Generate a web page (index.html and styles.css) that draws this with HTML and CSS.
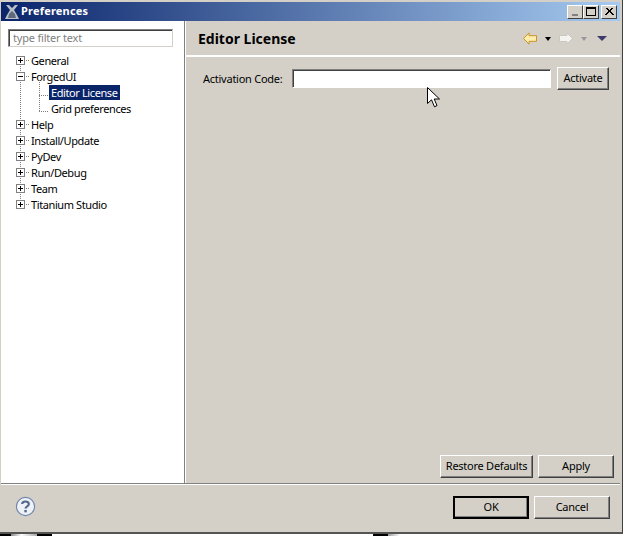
FILE: index.html
```html
<!DOCTYPE html>
<html lang="en">
<head>
    <meta charset="UTF-8">
    <meta name="viewport" content="width=device-width, initial-scale=1.0">
    <title>Preferences</title>
    <link rel="stylesheet" href="styles.css">
</head>
<body>
    <div class="window">
        <div class="titlebar">
            <svg class="app-icon" width="16" height="16" viewBox="0 0 16 16">
                <path d="M2 1 L5 1 L8 4 L11 1 L14 1 L10 6 L13 11 L15 15 L1 15 L3 11 L6 6 Z" fill="#b9c0c8"/>
                <path d="M5 10 L8 7 L11 10 L12 14 L4 14 Z" fill="#5f6b7c"/>
            </svg>
            <span class="title-text">Preferences</span>
            <div class="win-buttons">
                <button class="win-btn win-min" type="button"><span></span></button>
                <button class="win-btn win-max" type="button"><span></span></button>
                <button class="win-btn win-close" type="button">
                    <svg width="9" height="8" viewBox="0 0 9 8"><path d="M1 0 L8 7 M8 0 L1 7 M2 0 L9 7 M7 0 L0 7" stroke="#000" stroke-width="1"/></svg>
                </button>
            </div>
        </div>
        <div class="main">
            <div class="side">
                <input class="filter" type="text" placeholder="type filter text">
                <ul class="tree">
                    <li class="row"><span class="exp plus"></span><span class="dots"></span><span class="label">General</span></li>
                    <li class="row"><span class="exp"></span><span class="dots"></span><span class="label">ForgedUI</span></li>
                    <li class="row child"><span class="elbow"></span><span class="label selected">Editor License</span></li>
                    <li class="row child"><span class="elbow"></span><span class="label">Grid preferences</span></li>
                    <li class="row"><span class="exp plus"></span><span class="dots"></span><span class="label">Help</span></li>
                    <li class="row"><span class="exp plus"></span><span class="dots"></span><span class="label">Install/Update</span></li>
                    <li class="row"><span class="exp plus"></span><span class="dots"></span><span class="label">PyDev</span></li>
                    <li class="row"><span class="exp plus"></span><span class="dots"></span><span class="label">Run/Debug</span></li>
                    <li class="row"><span class="exp plus"></span><span class="dots"></span><span class="label">Team</span></li>
                    <li class="row"><span class="exp plus"></span><span class="dots"></span><span class="label">Titanium Studio</span></li>
                </ul>
            </div>
            <div class="page">
                <div class="page-head">
                    <h1>Editor License</h1>
                    <div class="nav">
                        <svg class="nav-arrow" width="14" height="13" viewBox="0 0 15 13">
                            <path d="M6.5 .5 L.5 6.5 L6.5 12.5 V9.5 H14.5 V3.5 H6.5 Z" fill="#fdeeb0" stroke="#c98a16"/>
                        </svg>
                        <span class="drop drop-black"></span>
                        <svg class="nav-arrow" width="14" height="13" viewBox="0 0 14 13">
                            <path d="M8 1 L13.5 6.5 L8 12 V9.5 H.5 V3.5 H8 Z" fill="#f4f3f0" stroke="#c9c8c3"/>
                        </svg>
                        <span class="drop drop-grey"></span>
                        <span class="drop-menu"></span>
                    </div>
                </div>
                <div class="page-body">
                    <div class="form-row">
                        <label class="code-label" for="code">Activation Code:</label>
                        <input class="code" id="code" type="text">
                        <button class="btn btn-activate" type="button">Activate</button>
                    </div>
                    <div class="page-actions">
                        <button class="btn btn-restore" type="button">Restore Defaults</button>
                        <button class="btn btn-apply" type="button">Apply</button>
                    </div>
                </div>
            </div>
        </div>
        <div class="footer">
            <svg class="help" width="21" height="21" viewBox="0 0 22 22">
                <circle cx="11" cy="11" r="9.5" fill="#eef1f6" stroke="#6f86ab" stroke-width="1.2"/>
                <path d="M7.5 8.5 C7.5 4.8 14.5 4.8 14.5 8.5 C14.5 11 11 10.8 11 13.2" fill="none" stroke="#52678c" stroke-width="2.2"/>
                <rect x="9.8" y="14.6" width="2.5" height="2.5" fill="#52678c"/>
            </svg>
            <div class="footer-actions">
                <button class="btn btn-default" type="button">OK</button>
                <button class="btn btn-cancel" type="button">Cancel</button>
            </div>
        </div>
    </div>
    <div class="taskbar-strip">
        <span class="strip-black-a"></span><span class="strip-grad"></span><span class="strip-black-b"></span>
        <span class="strip-black-c"></span><span class="strip-grey"></span>
    </div>
    <svg class="cursor" width="14" height="21" viewBox="0 0 14 21">
        <path d="M.5 .5 V16.5 L4.5 12.8 L7.5 19.8 L10 18.6 L7.2 12 H12.5 Z" fill="#fff" stroke="#000"/>
    </svg>
</body>
</html>
```

FILE: styles.css
```css
* {
    box-sizing: border-box;
}

html, body {
    margin: 0;
    padding: 0;
    height: 100%;
    overflow: hidden;
}

body {
    position: relative;
    font-family: "Noto Sans", Arial, sans-serif;
    font-size: 11px;
    letter-spacing: -0.4px;
    color: #000;
    background-color: #fff;
}

.window {
    height: 534px;
    display: flex;
    flex-direction: column;
    background-color: #d4d0c8;
    border-bottom: 2px solid #555;
    border-right: 1px solid #404040;
    padding: 2px 2px 0 1px;
}

/* title bar */
.titlebar {
    height: 19px;
    flex: none;
    display: flex;
    align-items: center;
    padding-left: 3px;
    background: linear-gradient(to right, #0a246a, #a6caf0);
    color: #fff;
}

.app-icon {
    margin-right: 1px;
}

.title-text {
    font-weight: bold;
    font-size: 11px;
    letter-spacing: 0.2px;
    padding-bottom: 2px;
}

.win-buttons {
    margin-left: auto;
    display: flex;
    padding-right: 3px;
}

.win-btn {
    width: 16px;
    height: 14px;
    padding: 0;
    background-color: #d4d0c8;
    border: 1px solid;
    border-color: #fff #404040 #404040 #fff;
    display: flex;
    align-items: center;
    justify-content: center;
}

.win-close {
    margin-left: 2px;
}

.win-min span {
    width: 6px;
    height: 2px;
    background-color: #808080;
    margin-top: 7px;
}

.win-max span {
    width: 10px;
    height: 9px;
    border: 1px solid #000;
    border-top-width: 2px;
}

/* main split */
.main {
    flex: 1;
    display: flex;
    min-height: 0;
    border-bottom: 1px solid #fff;
    box-shadow: inset 0 -1px 0 #808080;
    padding-bottom: 1px;
}

.side {
    width: 184px;
    flex: none;
    background-color: #fff;
    border-right: 1px solid #808080;
    padding: 8px 0 0 7px;
}

.filter {
    display: block;
    width: 165px;
    height: 18px;
    padding: 0 4px 2px;
    font-family: inherit;
    font-size: 11px;
    letter-spacing: -0.2px;
    background-color: #fff;
    border: 1px solid;
    border-color: #808080 #d4d0c8 #d4d0c8 #808080;
    box-shadow: inset 1px 1px 0 #404040;
    outline: none;
}

.filter::placeholder {
    color: #808080;
    opacity: 1;
}

.tree {
    list-style: none;
    margin: 5px 0 0;
    padding: 0;
    background-image: repeating-linear-gradient(to bottom, #808080 0 1px, transparent 1px 2px);
    background-repeat: no-repeat;
    background-position: 12px 8px;
    background-size: 1px 144px;
}

.row {
    height: 16px;
    display: flex;
    align-items: center;
    padding-left: 8px;
}

.exp {
    width: 9px;
    height: 9px;
    flex: none;
    border: 1px solid #808080;
    background: linear-gradient(#000, #000) center / 5px 1px no-repeat #fff;
}

.exp.plus {
    background:
        linear-gradient(#000, #000) center / 5px 1px no-repeat,
        linear-gradient(#000, #000) center / 1px 5px no-repeat,
        #fff;
}

.dots {
    width: 4px;
    height: 1px;
    margin-left: 1px;
    background-image: repeating-linear-gradient(to right, #808080 0 1px, transparent 1px 2px);
}

.label {
    padding: 0 1px;
    line-height: 15px;
    white-space: nowrap;
}

.child {
    padding-left: 31px;
}

.child .label {
    padding: 0 2px;
}

.elbow {
    width: 10px;
    height: 16px;
    flex: none;
    margin-top: -8px;
    background-image:
        repeating-linear-gradient(to bottom, #808080 0 1px, transparent 1px 2px),
        repeating-linear-gradient(to right, #808080 0 1px, transparent 1px 2px);
    background-repeat: no-repeat;
    background-size: 1px 100%, 100% 1px;
    background-position: 0 0, 0 100%;
}

.selected {
    background-color: #0a246a;
    color: #fff;
}

/* right page */
.page {
    flex: 1;
    display: flex;
    flex-direction: column;
    min-width: 0;
    border-left: 1px solid #fff;
}

.page-head {
    height: 36px;
    flex: none;
    display: flex;
    align-items: center;
    padding: 1px 13px 0 12px;
    border-bottom: 2px solid;
    border-image: linear-gradient(to bottom, #808080 50%, #fff 50%) 2;
}

.page-head h1 {
    margin: 0;
    font-size: 14px;
    font-weight: bold;
    letter-spacing: 0;
}

.nav {
    margin-left: auto;
    display: flex;
    align-items: center;
}

.drop {
    width: 0;
    height: 0;
    margin: 0 8px;
    border-left: 3px solid transparent;
    border-right: 3px solid transparent;
    border-top: 4px solid #000;
}

.drop-grey {
    border-top-color: #999;
}

.drop-menu {
    width: 0;
    height: 0;
    margin-left: 2px;
    border-left: 5px solid transparent;
    border-right: 5px solid transparent;
    border-top: 5px solid #3e3a6e;
}

.page-body {
    flex: 1;
    display: flex;
    flex-direction: column;
    padding: 10px 6px 5px 13px;
}

.form-row {
    display: flex;
    align-items: center;
    padding-right: 5px;
}

.code-label {
    width: 93px;
    flex: none;
    padding-left: 4px;
    letter-spacing: -0.25px;
}

.code {
    width: 259px;
    height: 19px;
    flex: none;
    background-color: #fff;
    border: 1px solid;
    border-color: #808080 #fff #fff #808080;
    box-shadow: inset 1px 1px 0 #404040;
    outline: none;
}

.btn {
    height: 23px;
    padding: 0 0 2px;
    font-family: inherit;
    font-size: 11px;
    letter-spacing: -0.25px;
    color: #000;
    background-color: #d4d0c8;
    border: 1px solid;
    border-color: #fff #404040 #404040 #fff;
    box-shadow: inset -1px -1px 0 #808080;
}

.btn-activate {
    width: 52px;
    margin-left: 6px;
}

.page-actions {
    margin-top: auto;
    display: flex;
    justify-content: flex-end;
    gap: 5px;
}

.btn-restore {
    width: 93px;
}

.btn-apply {
    width: 76px;
}

/* footer */
.footer {
    height: 47px;
    flex: none;
    display: flex;
    align-items: center;
    padding: 0 10px 2px 14px;
}

.help {
    margin-bottom: 2px;
}

.footer-actions {
    margin-left: auto;
    display: flex;
    gap: 5px;
}

.btn-default,
.btn-cancel {
    width: 76px;
}

.btn-default {
    border: 2px solid #000;
    box-shadow: inset -1px -1px 0 #808080;
}

.taskbar-strip {
    display: flex;
    height: 2px;
}

.strip-black-a {
    width: 11px;
    background-color: #000;
}

.strip-grad {
    width: 26px;
    background: linear-gradient(to right, #888, #fff 40%, #aaa);
}

.strip-black-b {
    width: 15px;
    background-color: #000;
}

.strip-black-c {
    width: 15px;
    margin-left: 321px;
    background-color: #000;
}

.strip-grey {
    width: 12px;
    background: linear-gradient(to right, #999, #fff);
}

.cursor {
    position: absolute;
    left: 427px;
    top: 87px;
}
```
